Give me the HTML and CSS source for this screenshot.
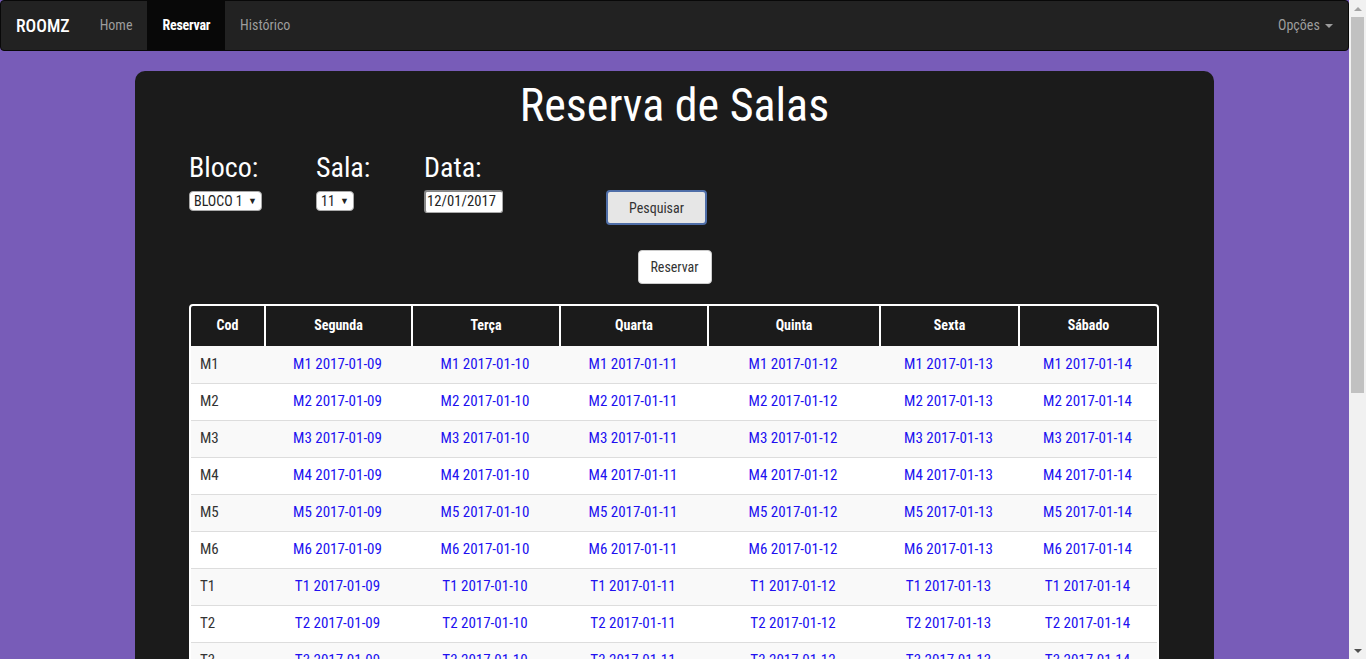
FILE: index.html
```html
<!DOCTYPE html>
<html lang="pt">
<head>
<meta charset="utf-8">
<title>ROOMZ</title>
<link rel="stylesheet" href="styles.css">
</head>
<body>
<nav class="navbar">
  <a class="brand" href="#">ROOMZ</a>
  <ul class="nav">
    <li><a href="#">Home</a></li>
    <li class="active"><a href="#">Reservar</a></li>
    <li><a href="#">Histórico</a></li>
  </ul>
  <div class="nav-right"><a href="#">Opções <span class="caret"></span></a></div>
</nav>

<main class="card">
  <h1 class="title">Reserva de Salas</h1>
  <div class="filters">
    <div class="group g-bloco">
      <label class="lbl">Bloco:</label>
      <span class="select">BLOCO 1 <span class="arrow">▼</span></span>
    </div>
    <div class="group g-sala">
      <label class="lbl">Sala:</label>
      <span class="select">11 <span class="arrow">▼</span></span>
    </div>
    <div class="group g-data">
      <label class="lbl">Data:</label>
      <span class="date">12/01/2017</span>
    </div>
    <div class="group g-btn">
      <button class="btn-search">Pesquisar</button>
    </div>
  </div>
  <div class="reserve-row"><button class="btn-reserve">Reservar</button></div>

  <table class="grid">
    <colgroup>
      <col class="c-cod"><col class="c-seg"><col class="c-ter"><col class="c-qua"><col class="c-qui"><col class="c-sex"><col class="c-sab">
    </colgroup>
    <thead>
      <tr><th>Cod</th><th>Segunda</th><th>Terça</th><th>Quarta</th><th>Quinta</th><th>Sexta</th><th>Sábado</th></tr>
    </thead>
    <tbody>
      <tr><td>M1</td><td><a href="#">M1 2017-01-09</a></td><td><a href="#">M1 2017-01-10</a></td><td><a href="#">M1 2017-01-11</a></td><td><a href="#">M1 2017-01-12</a></td><td><a href="#">M1 2017-01-13</a></td><td><a href="#">M1 2017-01-14</a></td></tr>
      <tr><td>M2</td><td><a href="#">M2 2017-01-09</a></td><td><a href="#">M2 2017-01-10</a></td><td><a href="#">M2 2017-01-11</a></td><td><a href="#">M2 2017-01-12</a></td><td><a href="#">M2 2017-01-13</a></td><td><a href="#">M2 2017-01-14</a></td></tr>
      <tr><td>M3</td><td><a href="#">M3 2017-01-09</a></td><td><a href="#">M3 2017-01-10</a></td><td><a href="#">M3 2017-01-11</a></td><td><a href="#">M3 2017-01-12</a></td><td><a href="#">M3 2017-01-13</a></td><td><a href="#">M3 2017-01-14</a></td></tr>
      <tr><td>M4</td><td><a href="#">M4 2017-01-09</a></td><td><a href="#">M4 2017-01-10</a></td><td><a href="#">M4 2017-01-11</a></td><td><a href="#">M4 2017-01-12</a></td><td><a href="#">M4 2017-01-13</a></td><td><a href="#">M4 2017-01-14</a></td></tr>
      <tr><td>M5</td><td><a href="#">M5 2017-01-09</a></td><td><a href="#">M5 2017-01-10</a></td><td><a href="#">M5 2017-01-11</a></td><td><a href="#">M5 2017-01-12</a></td><td><a href="#">M5 2017-01-13</a></td><td><a href="#">M5 2017-01-14</a></td></tr>
      <tr><td>M6</td><td><a href="#">M6 2017-01-09</a></td><td><a href="#">M6 2017-01-10</a></td><td><a href="#">M6 2017-01-11</a></td><td><a href="#">M6 2017-01-12</a></td><td><a href="#">M6 2017-01-13</a></td><td><a href="#">M6 2017-01-14</a></td></tr>
      <tr><td>T1</td><td><a href="#">T1 2017-01-09</a></td><td><a href="#">T1 2017-01-10</a></td><td><a href="#">T1 2017-01-11</a></td><td><a href="#">T1 2017-01-12</a></td><td><a href="#">T1 2017-01-13</a></td><td><a href="#">T1 2017-01-14</a></td></tr>
      <tr><td>T2</td><td><a href="#">T2 2017-01-09</a></td><td><a href="#">T2 2017-01-10</a></td><td><a href="#">T2 2017-01-11</a></td><td><a href="#">T2 2017-01-12</a></td><td><a href="#">T2 2017-01-13</a></td><td><a href="#">T2 2017-01-14</a></td></tr>
      <tr><td>T3</td><td><a href="#">T3 2017-01-09</a></td><td><a href="#">T3 2017-01-10</a></td><td><a href="#">T3 2017-01-11</a></td><td><a href="#">T3 2017-01-12</a></td><td><a href="#">T3 2017-01-13</a></td><td><a href="#">T3 2017-01-14</a></td></tr>
      <tr><td>T4</td><td><a href="#">T4 2017-01-09</a></td><td><a href="#">T4 2017-01-10</a></td><td><a href="#">T4 2017-01-11</a></td><td><a href="#">T4 2017-01-12</a></td><td><a href="#">T4 2017-01-13</a></td><td><a href="#">T4 2017-01-14</a></td></tr>
      <tr><td>T5</td><td><a href="#">T5 2017-01-09</a></td><td><a href="#">T5 2017-01-10</a></td><td><a href="#">T5 2017-01-11</a></td><td><a href="#">T5 2017-01-12</a></td><td><a href="#">T5 2017-01-13</a></td><td><a href="#">T5 2017-01-14</a></td></tr>
      <tr><td>T6</td><td><a href="#">T6 2017-01-09</a></td><td><a href="#">T6 2017-01-10</a></td><td><a href="#">T6 2017-01-11</a></td><td><a href="#">T6 2017-01-12</a></td><td><a href="#">T6 2017-01-13</a></td><td><a href="#">T6 2017-01-14</a></td></tr>
    </tbody>
  </table>
</main>

<div class="scrollbar" aria-hidden="true">
  <span class="sb-up"></span>
  <span class="sb-thumb"></span>
  <span class="sb-down"></span>
</div>
</body>
</html>
```

FILE: styles.css
```css
* { box-sizing: border-box; }
html, body { margin: 0; padding: 0; }
body {
  background: #785cb8;
  font-family: "Roboto Condensed", "Liberation Sans Narrow", "Roboto", sans-serif;
  font-size: 14px;
  line-height: 1.42857;
  color: #333;
  margin-right: 17px;
}
a { text-decoration: none; }

/* imitation of the browser's vertical scrollbar */
.scrollbar {
  position: fixed;
  top: 0; right: 0; bottom: 0;
  width: 17px;
  background: #f1f1f1;
  display: flex;
  flex-direction: column;
  align-items: center;
}
.sb-up, .sb-down { display: flex; height: 17px; width: 17px; align-items: center; justify-content: center; }
.sb-up::before {
  content: "";
  border-bottom: 4px solid #a3a3a3;
  border-left: 4px solid transparent;
  border-right: 4px solid transparent;
}
.sb-down::before {
  content: "";
  border-top: 4px solid #505050;
  border-left: 4px solid transparent;
  border-right: 4px solid transparent;
}
.sb-thumb {
  width: 13px;
  height: 376px;
  background: #c1c1c1;
  margin-bottom: auto;
}

.navbar {
  display: flex;
  align-items: stretch;
  height: 51px;
  background: #222;
  border: 1px solid #080808;
  border-radius: 4px;
}
.brand {
  color: #fff;
  font-size: 17.7px;
  line-height: 20px;
  padding: 15px 15px;
  font-weight: 500;
}
.nav { display: flex; list-style: none; margin: 0; padding: 0; }
.nav li a {
  display: block;
  color: #9d9d9d;
  padding: 15px 15px;
  line-height: 19px;
  height: 49px;
}
.nav li.active a { background: #080808; color: #fff; font-weight: 700; letter-spacing: -0.25px; }
.nav-right { margin-left: auto; }
.nav-right a {
  display: block;
  color: #9d9d9d;
  padding: 15px 15px;
  line-height: 19px;
}
.caret {
  display: inline-block;
  width: 0; height: 0;
  margin-left: 2px;
  vertical-align: middle;
  border-top: 4px solid #9d9d9d;
  border-left: 4px solid transparent;
  border-right: 4px solid transparent;
}

.card {
  width: 1079px;
  margin: 20px auto 0;
  background: #1b1b1b;
  border-radius: 10px;
  padding: 8px 54px 40px;
}
.title {
  margin: 0;
  text-align: center;
  color: #fff;
  font-weight: 400;
  font-size: 46px;
  line-height: 52px;
}
.filters { display: flex; margin-top: 21px; }
.group { display: flex; flex-direction: column; align-items: flex-start; }
.g-bloco { width: 127px; }
.g-sala { width: 108px; }
.g-data { width: 182px; }
.g-btn { padding-top: 38px; }
.lbl { color: #fff; font-size: 28px; line-height: 32px; margin-bottom: 7px; }
.select {
  background: #fff;
  color: #222;
  border-radius: 4px;
  border: 1px solid #aaa;
  font-size: 14px;
  line-height: 18px;
  height: 20px;
  padding: 0 4px 0 4px;
  white-space: nowrap;
}
.arrow { font-size: 9px; vertical-align: 2px; margin-left: 2px; }
.date {
  background: #fff;
  color: #222;
  border: 1px solid #aaa;
  border-top: 2px solid #888;
  border-left: 2px solid #888;
  border-radius: 3px;
  font-size: 14.7px;
  line-height: 18px;
  height: 23px;
  width: 79px;
  padding: 0 0 0 1px;
  margin-top: -1px;
}
.btn-search {
  width: 101px;
  height: 35px;
  background: #e6e6e6;
  border: 2px solid #4f6ea8;
  border-radius: 4px;
  font-family: inherit;
  font-size: 14px;
  color: #333;
}
.reserve-row { display: flex; justify-content: center; margin-top: 25px; }
.btn-reserve {
  width: 74px;
  height: 34px;
  background: #fff;
  border: 1px solid #ccc;
  border-radius: 4px;
  font-family: inherit;
  font-size: 14px;
  color: #333;
}

.grid {
  width: 970px;
  margin-top: 20px;
  border-collapse: separate;
  border-spacing: 0;
  background: #fff;
  border: 2px solid #fff;
  border-radius: 4px;
  overflow: hidden;
  table-layout: fixed;
}
.c-cod { width: 73px; }
.c-seg { width: 147px; }
.c-ter { width: 148px; }
.c-qua { width: 148px; }
.c-qui { width: 172px; }
.c-sex { width: 139px; }
.c-sab { width: 139px; }
.grid th {
  background: #1b1b1b;
  color: #fff;
  font-weight: 700;
  font-size: 14px;
  height: 40px;
  padding: 0 8px;
  text-align: center;
  border-left: 2px solid #fff;
}
.grid th:first-child { border-left: none; }
.grid td {
  height: 37px;
  padding: 0 8px;
  text-align: center;
  border-top: 1px solid #ddd;
  color: #333;
  font-size: 15px;
}
.grid tbody tr:first-child td { border-top: none; }
.grid td:first-child { text-align: left; padding-left: 9px; }
.grid tbody tr:nth-child(odd) td { background: #f9f9f9; }
.grid td a { color: #2010f0; }
```
